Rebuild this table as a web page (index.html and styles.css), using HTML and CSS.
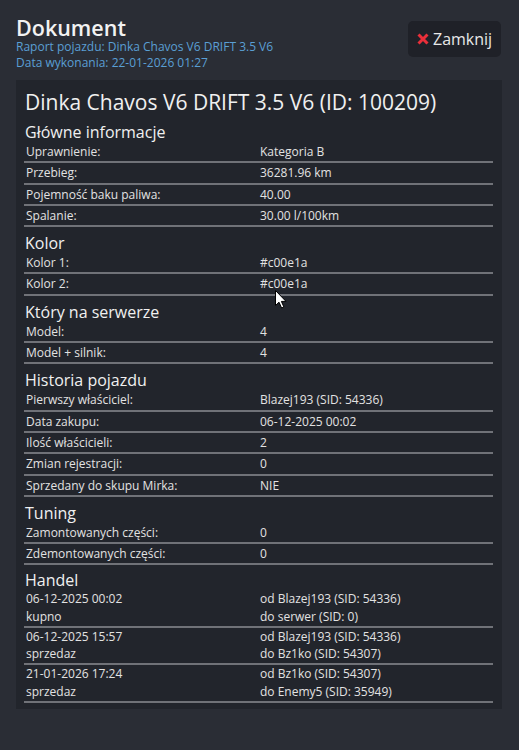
FILE: index.html
```html
<!DOCTYPE html>
<html lang="pl">
<head>
<meta charset="utf-8">
<link rel="stylesheet" href="styles.css">
</head>
<body>
<div class="header">
  <div class="head-text">
    <h1 class="doc-title">Dokument</h1>
    <div class="sub">Raport pojazdu: Dinka Chavos V6 DRIFT 3.5 V6</div>
    <div class="sub">Data wykonania: 22-01-2026 01:27</div>
  </div>
  <button class="close-btn"><svg class="x-icon" viewBox="0 0 12 12" width="12" height="12"><path d="M1.5 1.5 L10.5 10.5 M10.5 1.5 L1.5 10.5" stroke="#ea2f3a" stroke-width="3" stroke-linecap="butt"/></svg>Zamknij</button>
</div>
<div class="panel">
  <h2 class="veh-title">Dinka Chavos V6 DRIFT 3.5 V6 (ID: 100209)</h2>

  <h3 class="sec">Główne informacje</h3>
  <div class="row"><span>Uprawnienie:</span><span>Kategoria B</span></div>
  <div class="row"><span>Przebieg:</span><span>36281.96 km</span></div>
  <div class="row"><span>Pojemność baku paliwa:</span><span>40.00</span></div>
  <div class="row"><span>Spalanie:</span><span>30.00 l/100km</span></div>

  <h3 class="sec">Kolor</h3>
  <div class="row"><span>Kolor 1:</span><span>#c00e1a</span></div>
  <div class="row"><span>Kolor 2:</span><span>#c00e1a</span></div>

  <h3 class="sec">Który na serwerze</h3>
  <div class="row"><span>Model:</span><span>4</span></div>
  <div class="row"><span>Model + silnik:</span><span>4</span></div>

  <h3 class="sec">Historia pojazdu</h3>
  <div class="row"><span>Pierwszy właściciel:</span><span>Blazej193 (SID: 54336)</span></div>
  <div class="row"><span>Data zakupu:</span><span>06-12-2025 00:02</span></div>
  <div class="row"><span>Ilość właścicieli:</span><span>2</span></div>
  <div class="row"><span>Zmian rejestracji:</span><span>0</span></div>
  <div class="row"><span>Sprzedany do skupu Mirka:</span><span>NIE</span></div>

  <h3 class="sec">Tuning</h3>
  <div class="row"><span>Zamontowanych części:</span><span>0</span></div>
  <div class="row"><span>Zdemontowanych części:</span><span>0</span></div>

  <h3 class="sec sec-last">Handel</h3>
  <div class="row row2"><span>06-12-2025 00:02<br>kupno</span><span>od Blazej193 (SID: 54336)<br>do serwer (SID: 0)</span></div>
  <div class="row row2"><span>06-12-2025 15:57<br>sprzedaz</span><span>od Blazej193 (SID: 54336)<br>do Bz1ko (SID: 54307)</span></div>
  <div class="row row2"><span>21-01-2026 17:24<br>sprzedaz</span><span>od Bz1ko (SID: 54307)<br>do Enemy5 (SID: 35949)</span></div>
</div>
<svg class="cursor" viewBox="0 0 12 19" width="12" height="19"><path d="M0.5 0.5 L0.5 15.5 L4 12.2 L6.6 18 L8.9 17 L6.4 11.4 L11 11.4 Z" fill="#ffffff" stroke="#000000" stroke-width="1" stroke-linejoin="round"/></svg>
</body>
</html>
```
FILE: styles.css
```css
* { box-sizing: border-box; }
html, body { margin: 0; height: 100%; }
body {
  position: relative;
  background: #2a2d35;
  font-family: "Open Sans", "Noto Sans", sans-serif;
  color: #e6e6e6;
  width: 519px;
  height: 750px;
  overflow: hidden;
}
.header {
  display: flex;
  justify-content: space-between;
  align-items: flex-start;
  padding: 16px 18px 0 16px;
  height: 80px;
}
.doc-title {
  margin: 0;
  font-size: 21.5px;
  font-weight: 600;
  line-height: 23px;
  color: #f2f2f2;
}
.sub {
  font-size: 12px;
  line-height: 16px;
  color: #5a9fd4;
}
.close-btn {
  margin-top: 5px;
  display: flex;
  align-items: center;
  gap: 4px;
  width: 93px;
  height: 36px;
  padding: 0 0 0 9px;
  background: #1f2128;
  border: none;
  border-radius: 5px;
  color: #e8e8e8;
  font-family: "Open Sans", sans-serif;
  font-size: 16px;
}
.x-icon { flex: none; }
.panel {
  margin: 0 17px 0 16px;
  background: #22252c;
  padding: 8px 9px 6px 8px;
}
.veh-title {
  margin: 0 0 0 1px;
  font-size: 21px;
  font-weight: 400;
  line-height: 28px;
  color: #f0f0f0;
}
.sec {
  margin: 7px 0 0 1px;
  font-size: 16px;
  font-weight: 400;
  line-height: 19px;
  color: #f0f0f0;
}
.sec-last { margin-top: 6px; }
.row {
  display: grid;
  grid-template-columns: 234px 1fr;
  font-size: 12px;
  line-height: 17.3px;
  padding: 1px 2px 1px 2px;
  border-bottom: 2px solid #707278;
  color: #e2e2e2;
}
.row2 { line-height: 17.5px; padding: 0 2px 0.5px 2px; }
.cursor {
  position: absolute;
  left: 275px;
  top: 290px;
}
```
